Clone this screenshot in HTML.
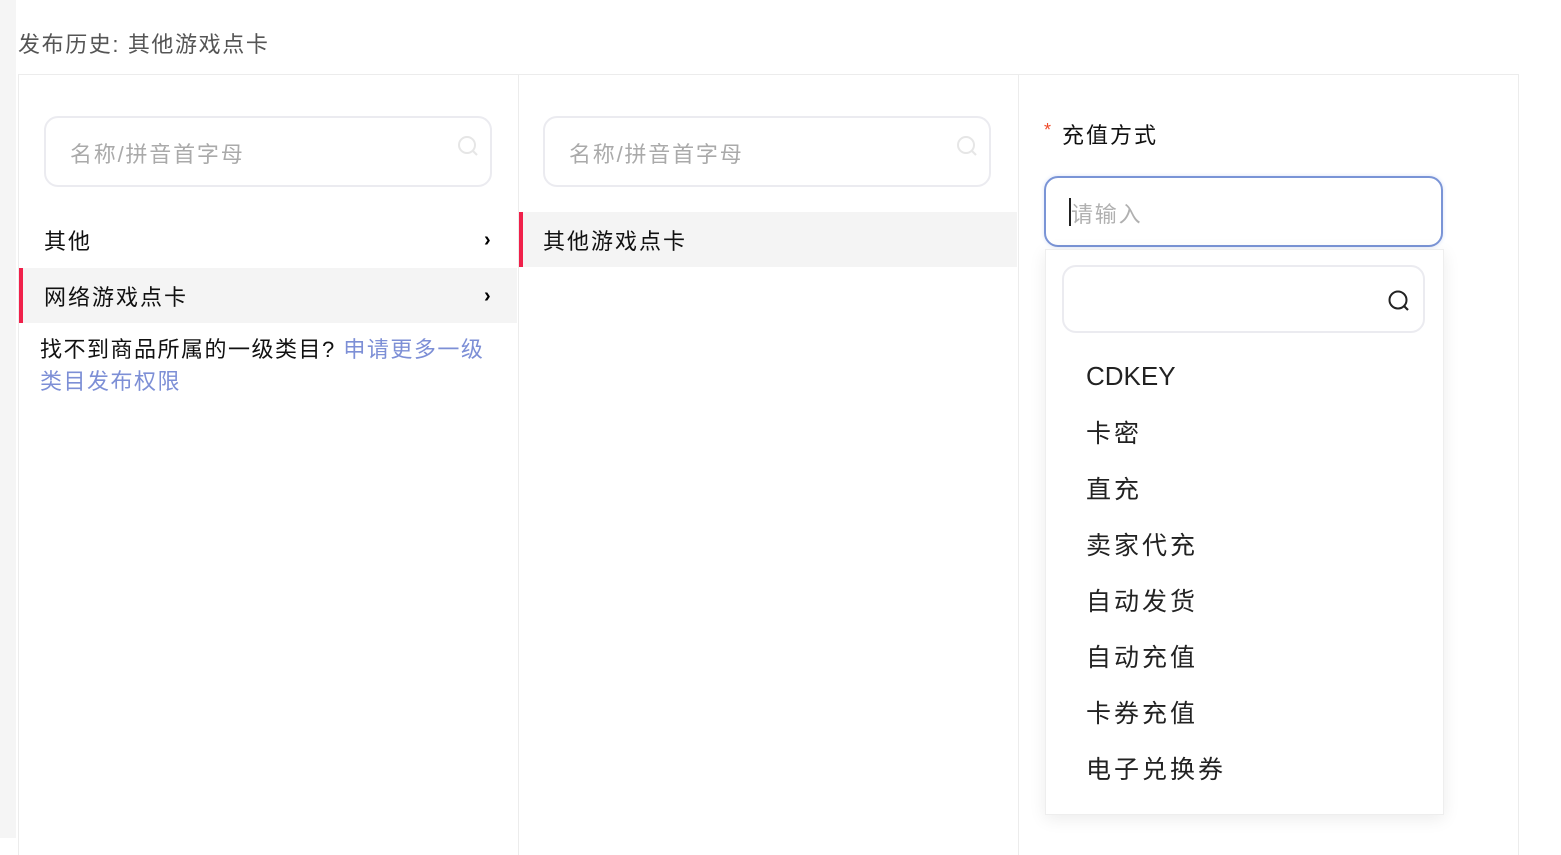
<!DOCTYPE html>
<html><head><meta charset="utf-8"><style>
body{margin:0;width:1561px;height:838px;background:#fff;font-family:"Liberation Sans","Noto Sans CJK SC",sans-serif;position:relative;overflow:hidden}
.abs{position:absolute}
.strip{left:0;top:0;width:16px;height:838px;background:#f5f5f5}
.title{left:18px;top:27px;font-size:22px;color:#555;letter-spacing:1.6px}
.col{top:74px;height:780px;width:499px;border:1px solid #ececec;border-bottom:none}
.search{border:2px solid #ebebf0;border-radius:14px;height:71px;width:448px;box-sizing:border-box}
.ph{font-size:22px;color:#aaa;letter-spacing:1.8px}
.item{font-size:22px;color:#111;letter-spacing:2px}
.dd{font-size:25px;color:#222;left:1086px;letter-spacing:3px}
</style></head><body>
<div class="abs strip"></div>
<div class="abs title">发布历史: 其他游戏点卡</div>
<div class="abs col" style="left:18px"></div>
<div class="abs col" style="left:518px"></div>
<div class="abs col" style="left:1018px"></div>

<div class="abs search" style="left:44px;top:116px"></div>
<div class="abs ph" style="left:70px;top:137px">名称/拼音首字母</div>
<svg class="abs" style="left:456px;top:134px" width="26" height="26"><circle cx="11" cy="11" r="8" fill="none" stroke="#e6e6e6" stroke-width="2"/><path d="M17 17l4 4" stroke="#e6e6e6" stroke-width="2"/></svg>
<div class="abs search" style="left:543px;top:116px"></div>
<div class="abs ph" style="left:569px;top:137px">名称/拼音首字母</div>
<svg class="abs" style="left:955px;top:134px" width="26" height="26"><circle cx="11" cy="11" r="8" fill="none" stroke="#e6e6e6" stroke-width="2"/><path d="M17 17l4 4" stroke="#e6e6e6" stroke-width="2"/></svg>

<div class="abs item" style="left:44px;top:224px">其他</div>
<div class="abs" style="left:484px;top:229px;font-size:20px;font-weight:bold">›</div>
<div class="abs" style="left:19px;top:268px;width:498px;height:55px;background:#f4f4f4;border-left:4px solid #f0204a;box-sizing:border-box"></div>
<div class="abs item" style="left:44px;top:280px">网络游戏点卡</div>
<div class="abs" style="left:484px;top:285px;font-size:20px;font-weight:bold">›</div>
<div class="abs item" style="left:40px;top:334px;width:458px;line-height:32px;letter-spacing:1.5px">找不到商品所属的一级类目? <span style="color:#7d8fd6">申请更多一级类目发布权限</span></div>

<div class="abs" style="left:519px;top:212px;width:498px;height:55px;background:#f4f4f4;border-left:4px solid #f0204a;box-sizing:border-box"></div>
<div class="abs item" style="left:543px;top:224px">其他游戏点卡</div>

<div class="abs" style="left:1044px;top:120px;font-size:18px;color:#f04a2a">*</div>
<div class="abs item" style="left:1062px;top:118px">充值方式</div>
<div class="abs" style="left:1044px;top:176px;width:399px;height:71px;box-sizing:border-box;border:2px solid #7a94d6;border-radius:14px;box-shadow:0 0 4px #d9e2f7"></div>
<div class="abs" style="left:1069px;top:198px;width:2px;height:28px;background:#222"></div>
<div class="abs ph" style="left:1071px;top:197px;color:#b0b0b0">请输入</div>

<div class="abs" style="left:1045px;top:249px;width:397px;height:564px;background:#fff;border:1px solid #eee;box-shadow:0 4px 16px rgba(0,0,0,.08)"></div>
<div class="abs" style="left:1062px;top:265px;width:363px;height:68px;box-sizing:border-box;border:2px solid #ebebf0;border-radius:14px"></div>
<svg class="abs" style="left:1386px;top:288px" width="28" height="28"><circle cx="12" cy="12" r="8.5" fill="none" stroke="#222" stroke-width="2"/><path d="M18 18l4 4" stroke="#222" stroke-width="2.2"/></svg>
<div class="abs dd" style="top:361px;font-size:26px;letter-spacing:0">CDKEY</div>
<div class="abs dd" style="top:414px">卡密</div>
<div class="abs dd" style="top:470px">直充</div>
<div class="abs dd" style="top:526px">卖家代充</div>
<div class="abs dd" style="top:582px">自动发货</div>
<div class="abs dd" style="top:638px">自动充值</div>
<div class="abs dd" style="top:694px">卡券充值</div>
<div class="abs dd" style="top:750px">电子兑换券</div>
</body></html>
